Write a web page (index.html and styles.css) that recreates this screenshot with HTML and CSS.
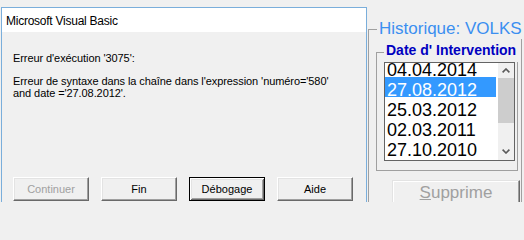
FILE: index.html
```html
<!DOCTYPE html>
<html lang="fr">
<head>
<meta charset="utf-8">
<title>Microsoft Visual Basic</title>
<link rel="stylesheet" href="styles.css">
</head>
<body>
<div class="screen">
  <section class="dialog">
    <div class="titlebar">Microsoft Visual Basic</div>
    <div class="dialog-body">
      <p class="msg msg-code">Erreur d'exécution '3075':</p>
      <p class="msg">Erreur de syntaxe dans la chaîne dans l'expression 'numéro='580'<br>and date ='27.08.2012'.</p>
      <div class="buttons">
        <button class="btn" disabled>Continuer</button>
        <button class="btn">Fin</button>
        <button class="btn btn-default">Débogage</button>
        <button class="btn">Aide</button>
      </div>
    </div>
  </section>
  <section class="form">
    <fieldset class="frame frame-outer">
      <legend class="frame-title">Historique: VOLKS</legend>
      <fieldset class="frame frame-inner">
        <legend class="frame-sub">Date d' Intervention</legend>
        <div class="listbox">
          <ul class="list">
            <li class="first">04.04.2014</li>
            <li class="selected">27.08.2012</li>
            <li>25.03.2012</li>
            <li>02.03.2011</li>
            <li>27.10.2010</li>
          </ul>
          <div class="scrollbar">
            <div class="sb-arrow sb-up"><svg width="8" height="5" viewBox="0 0 8 5"><polyline points="0.6,4.4 4,1 7.4,4.4" fill="none" stroke="#5a5a5a" stroke-width="1.6"/></svg></div>
            <div class="sb-thumb"></div>
            <div class="sb-track"></div>
            <div class="sb-arrow sb-down"><svg width="8" height="5" viewBox="0 0 8 5"><polyline points="0.6,0.6 4,4 7.4,0.6" fill="none" stroke="#5a5a5a" stroke-width="1.6"/></svg></div>
          </div>
        </div>
      </fieldset>
      <button class="btn btn-large" disabled><u>S</u>upprime</button>
    </fieldset>
  </section>
</div>
</body>
</html>
```

FILE: styles.css
```css
html, body {
  margin: 0;
  padding: 0;
  background: #f0f0f0;
}
body {
  width: 524px;
  height: 202px;
  overflow: hidden;
  font-family: "Liberation Sans", Arial, sans-serif;
}
.screen {
  display: flex;
  height: 202px;
  overflow: hidden;
}

/* ---------- dialog ---------- */
.dialog {
  flex: none;
  width: 366px;
  height: 195px;
  margin: 7px 0 0 1px;
  border: 1px solid #7aaedb;
  border-bottom: none;
  box-sizing: border-box;
  background: #f0f0f0;
}
.titlebar {
  height: 24px;
  line-height: 26px;
  padding-left: 4px;
  background: #ffffff;
  color: #000;
  font-size: 12px;
  letter-spacing: -0.25px;
  white-space: nowrap;
}
.dialog-body {
  padding: 20px 0 0 11px;
  font-size: 11px;
  line-height: 12px;
  letter-spacing: -0.08px;
  color: #000;
}
.msg {
  margin: 0;
  white-space: nowrap;
}
.msg-code {
  margin-bottom: 11px;
}
.buttons {
  display: flex;
  gap: 12px;
  margin-top: 78px;
  letter-spacing: 0;
}

/* ---------- classic buttons ---------- */
.btn {
  width: 76px;
  height: 24px;
  box-sizing: border-box;
  padding: 0;
  font-family: "Liberation Sans", Arial, sans-serif;
  font-size: 11px;
  line-height: 22px;
  color: #000;
  background: #f0f0f0;
  border: 1px solid;
  border-color: #ffffff #696969 #696969 #ffffff;
  box-shadow: inset -1px -1px 0 #a0a0a0, inset 1px 1px 0 #e3e3e3;
  border-radius: 0;
}
.btn:disabled {
  color: #a0a0a0;
}
.btn-default {
  border-color: #000;
  box-shadow: inset 1px 1px 0 #ffffff, inset -1px -1px 0 #696969, inset 2px 2px 0 #e3e3e3, inset -2px -2px 0 #a0a0a0;
}
.btn-large {
  display: block;
  width: 128px;
  height: 22px;
  margin: 9px 0 0 23px;
  padding-top: 2px;
  border-bottom-width: 0;
  border-color: #e3e3e3 #696969 #696969 #e3e3e3;
  box-shadow: inset -1px 0 0 #a0a0a0, inset 1px 1px 0 #ffffff;
  font-size: 17px;
  line-height: 17px;
}
.btn-large u {
  text-underline-offset: 1px;
}

/* ---------- background form ---------- */
.form {
  flex: 1;
  min-width: 0;
}
.frame {
  min-width: 0;
  margin: 0;
  padding: 0;
  border: 1px solid #a0a0a0;
  box-sizing: border-box;
}
.frame-outer {
  width: 154px;
  height: 183px;
  margin: 19px 0 0 1px;
  border-bottom-width: 0;
}
.frame-title {
  margin-left: 8px;
  padding: 0 2px;
  font-size: 17px;
  line-height: 20px;
  color: #3b8ff0;
  white-space: nowrap;
}
.frame-inner {
  width: 142px;
  margin: 3px 0 0 7px;
  padding: 0 0 9px 0;
}
.frame-sub {
  margin-left: 7px;
  padding: 0 2px 4px;
  font-size: 14px;
  font-weight: bold;
  line-height: 16px;
  color: #0000c0;
  white-space: nowrap;
}

/* ---------- listbox ---------- */
.listbox {
  display: flex;
  width: 131px;
  height: 99px;
  margin-left: 7px;
  box-sizing: border-box;
  border: 1px solid #646464;
  background: #ffffff;
}
.list {
  flex: 1;
  min-width: 0;
  margin: 0 2px 0 0;
  padding: 0;
  list-style: none;
  font-size: 18px;
  color: #000;
}
.list li {
  height: 20px;
  line-height: 26px;
  padding-left: 2px;
  white-space: nowrap;
}
.list li.first {
  height: 14px;
  line-height: 14px;
}
.list li.selected {
  background: #3399ff;
  color: #ffffff;
}
.scrollbar {
  flex: none;
  width: 16px;
  display: flex;
  flex-direction: column;
  background: #f0f0f0;
}
.sb-arrow {
  display: flex;
  align-items: center;
  justify-content: center;
}
.sb-up {
  height: 15px;
}
.sb-down {
  height: 17px;
}
.sb-thumb {
  height: 45px;
  background: #cdcdcd;
}
.sb-track {
  flex: 1;
}
```
